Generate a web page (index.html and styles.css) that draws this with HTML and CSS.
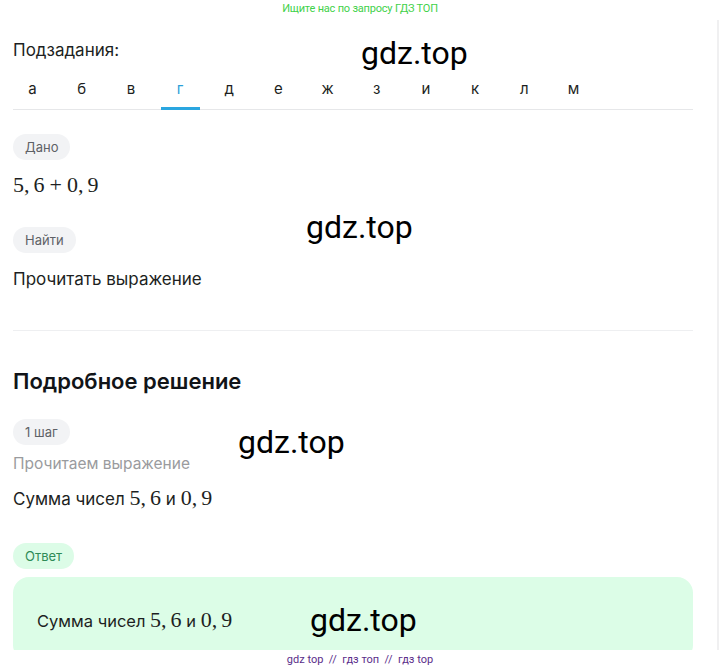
FILE: index.html
```html
<!DOCTYPE html>
<html lang="ru">
<head>
<meta charset="utf-8">
<link rel="stylesheet" href="styles.css">
</head>
<body>
<div class="banner">Ищите нас по запросу ГДЗ ТОП</div>
<div class="page">
  <div class="title">Подзадания:</div>
  <div class="tabs">
    <span class="tab">а</span><span class="tab">б</span><span class="tab">в</span><span class="tab active">г</span><span class="tab">д</span><span class="tab">е</span><span class="tab">ж</span><span class="tab">з</span><span class="tab">и</span><span class="tab">к</span><span class="tab">л</span><span class="tab">м</span>
  </div>
  <section class="given">
    <span class="pill">Дано</span>
    <div class="math big">5,<span class="sp"></span>6<span class="op">+</span>0,<span class="sp"></span>9</div>
    <span class="pill">Найти</span>
    <div class="text">Прочитать выражение</div>
  </section>
  <h2 class="h2">Подробное решение</h2>
  <span class="pill">1 шаг</span>
  <div class="muted">Прочитаем выражение</div>
  <div class="text step">Сумма чисел <span class="math">5,<span class="sp"></span>6</span> и <span class="math">0,<span class="sp"></span>9</span></div>
  <span class="pill green">Ответ</span>
  <div class="answer">Сумма чисел <span class="math">5,<span class="sp"></span>6</span> и <span class="math">0,<span class="sp"></span>9</span></div>
</div>
<div class="footer">gdz top &nbsp;//&nbsp; гдз топ &nbsp;//&nbsp; гдз top</div>
<div class="edge"></div>
<div class="wm wm1">gdz.top</div>
<div class="wm wm2">gdz.top</div>
<div class="wm wm3">gdz.top</div>
<div class="wm wm4">gdz.top</div>
</body>
</html>
```
FILE: styles.css
```css
html, body { margin: 0; padding: 0; background: #fff; }
body {
  font-family: Inter, "Noto Sans", sans-serif;
  color: #1d1f22;
  width: 720px;
  height: 672px;
  overflow: hidden;
  position: relative;
}
.banner {
  font-family: Roboto, "Liberation Sans", sans-serif;
  font-size: 11px;
  color: #3fd14a;
  text-align: center;
  height: 16px;
  line-height: 17px;
  letter-spacing: -0.2px;
}
.page {
  width: 680px;
  margin-left: 13px;
  display: flex;
  flex-direction: column;
  align-items: flex-start;
}
.title {
  font-size: 17px;
  margin-top: 22px;
  line-height: 24px;
  color: #1d1f22;
}
.tabs {
  display: flex;
  gap: 10.2px;
  width: 680px;
  border-bottom: 1px solid #e6e7e9;
  margin-top: 16px;
}
.tab {
  width: 39px;
  text-align: center;
  font-size: 15px;
  line-height: 20px;
  padding: 1px 0 8px;
  border-bottom: 3px solid transparent;
  margin-bottom: -1px;
  color: #1d1f22;
}
.tab.active { color: #2a9fd8; border-bottom-color: #2aa6e0; }
.given {
  width: 680px;
  border-bottom: 1px solid #eeeff1;
  padding-top: 24px;
  padding-bottom: 40px;
  display: flex;
  flex-direction: column;
  align-items: flex-start;
}
.pill {
  display: inline-block;
  height: 26px;
  line-height: 26px;
  padding: 0 12px;
  border-radius: 13px;
  background: #f2f3f5;
  color: #5e6166;
  font-size: 13px;
}
.pill.green { background: #dcfce7; color: #2e8b57; }
.math {
  font-family: "Liberation Serif", "DejaVu Serif", serif;
  font-size: 22px;
}
.math .sp { display: inline-block; width: 4px; }
.math .op { display: inline-block; padding: 0 5px; }
.math.big { margin: 12px 0 29px; line-height: 26px; }
.text { font-size: 17px; line-height: 22px; margin-top: 15px; color: #1d1f22; }
.h2 {
  font-size: 22px;
  font-weight: 600;
  margin: 36px 0 24px;
  line-height: 28px;
  color: #111418;
}
.muted { font-size: 15.5px; color: #9a9b9e; margin-top: 8px; line-height: 22px; }
.text.step { margin-top: 12px; }
.pill.green { margin-top: 33px; }
.answer {
  width: 632px;
  margin-top: 8px;
  background: #dcfde7;
  border-radius: 16px;
  padding: 32px 24px 30px;
  font-size: 16.5px;
  line-height: 22px;
  height: 22px;
}
.footer {
  position: absolute;
  left: 0;
  top: 650px;
  width: 720px;
  height: 22px;
  background: #fff;
  text-align: center;
  font-family: Roboto, "Liberation Sans", sans-serif;
  font-size: 11px;
  line-height: 20px;
  color: #5a2d8a;
}
.edge {
  position: absolute;
  right: 1px;
  top: 20px;
  width: 2px;
  height: 630px;
  background: #f0f0f1;
}
.wm {
  position: absolute;
  font-family: Roboto, "Liberation Sans", sans-serif;
  font-size: 32px;
  line-height: 32px;
  color: #000;
}
.wm1 { left: 361px; top: 37px; }
.wm2 { left: 306px; top: 211px; }
.wm3 { left: 238px; top: 426px; }
.wm4 { left: 310px; top: 604px; }
```
